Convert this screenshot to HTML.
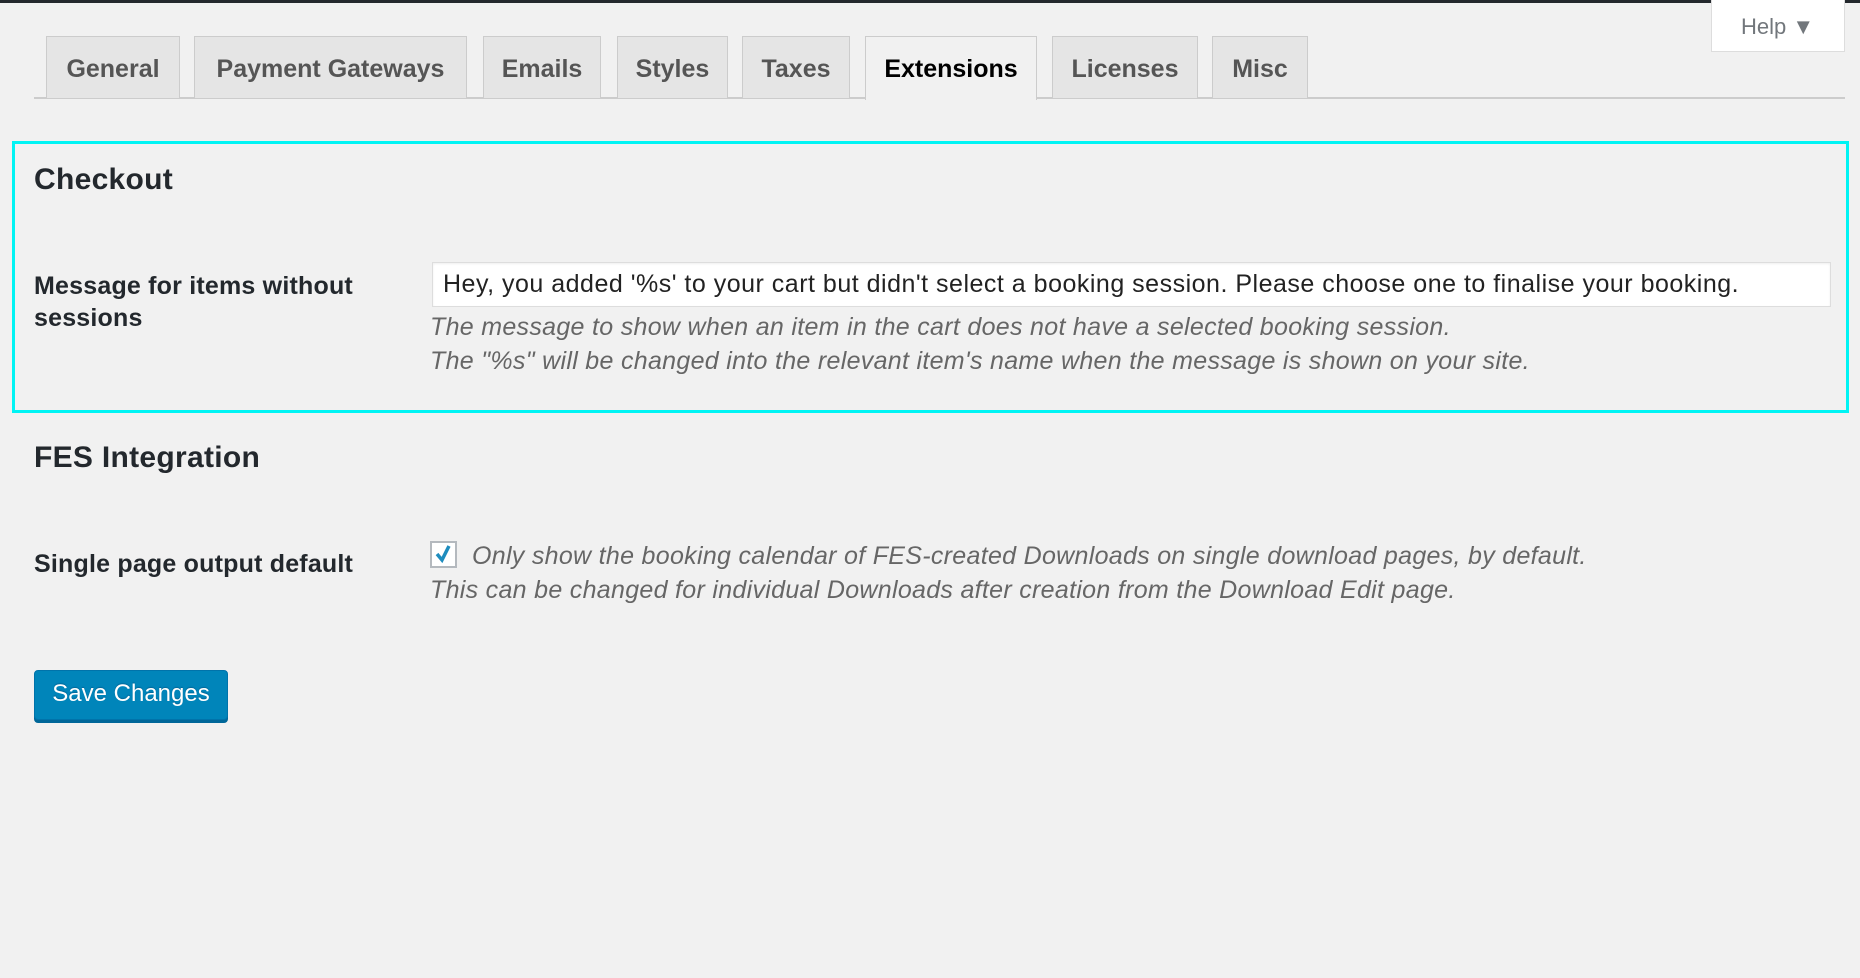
<!DOCTYPE html>
<html><head><meta charset="utf-8"><style>
*{box-sizing:border-box;margin:0;padding:0}
body{width:1860px;height:978px;background:#f1f1f1;font-family:"Liberation Sans",Arial,sans-serif;color:#23282d;position:relative;overflow:hidden}
.top{position:absolute;left:0;top:0;width:1860px;height:3px;background:#23282d}
.help{position:absolute;left:1711px;top:0;width:134px;height:52px;background:#fff;border:1px solid #ddd;border-top:none;font-size:22px;color:#72777c;padding:14px 0 0 29px}
.tabline{position:absolute;left:34px;top:97px;width:1811px;height:2px;background:#ccc}
.tab{position:absolute;top:36px;height:62px;background:#e5e5e5;border:1px solid #ccc;border-bottom:none;font-size:25px;font-weight:bold;color:#555;text-align:center;line-height:64px}
.tab.active{background:#f1f1f1;color:#000;height:64px}
.box{position:absolute;left:12px;top:141px;width:1837px;height:272px;border:3px solid #00f4f4}
.h{position:absolute;font-size:30px;font-weight:bold;color:#23282d;letter-spacing:0.3px}
.lbl{position:absolute;font-size:25px;font-weight:bold;line-height:32px;color:#23282d;letter-spacing:0.2px}
.inp{position:absolute;left:432px;top:262px;width:1399px;height:45px;background:#fff;border:1px solid #ddd;box-shadow:inset 0 1px 2px rgba(0,0,0,.07);font-size:25px;color:#222;padding:7px 0 0 10px;letter-spacing:0.5px;white-space:nowrap}
.desc{position:absolute;font-size:25px;font-style:italic;color:#666;line-height:34px;letter-spacing:0.3px;white-space:nowrap}
.cb{position:absolute;left:430px;top:541px;width:27px;height:27px;background:#fff;border:2px solid #b4b9be}
.btn{position:absolute;left:34px;top:670px;width:194px;height:50px;background:#0085ba;border:1px solid #0073aa;border-radius:4px;box-shadow:0 3px 0 #006799;color:#fff;font-size:24px;text-align:center;line-height:46px;text-shadow:0 -1px 1px #006799}
</style></head><body>
<div class="top"></div>
<div class="help">Help &#9660;</div>
<div class="tabline"></div>
<div class="tab" style="left:46px;width:134px">General</div>
<div class="tab" style="left:194px;width:273px">Payment Gateways</div>
<div class="tab" style="left:483px;width:118px">Emails</div>
<div class="tab" style="left:617px;width:111px">Styles</div>
<div class="tab" style="left:742px;width:108px">Taxes</div>
<div class="tab active" style="left:865px;width:172px">Extensions</div>
<div class="tab" style="left:1052px;width:146px">Licenses</div>
<div class="tab" style="left:1212px;width:96px">Misc</div>
<div class="box"></div>
<div class="h" style="left:34px;top:163px">Checkout</div>
<div class="lbl" style="left:34px;top:270px">Message for items without<br>sessions</div>
<div class="inp">Hey, you added '%s' to your cart but didn't select a booking session. Please choose one to finalise your booking.</div>
<div class="desc" style="left:430px;top:310px">The message to show when an item in the cart does not have a selected booking session.<br>The "%s" will be changed into the relevant item's name when the message is shown on your site.</div>
<div class="h" style="left:34px;top:441px">FES Integration</div>
<div class="lbl" style="left:34px;top:548px">Single page output default</div>
<div class="cb"><svg width="23" height="23" viewBox="0 0 23 23"><path d="M5 11 L10 17 L17 3" fill="none" stroke="#1e8cbe" stroke-width="3.5"/></svg></div>
<div class="desc" style="left:472px;top:539px">Only show the booking calendar of FES-created Downloads on single download pages, by default.</div>
<div class="desc" style="left:430px;top:573px">This can be changed for individual Downloads after creation from the Download Edit page.</div>
<div class="btn">Save Changes</div>
</body></html>
